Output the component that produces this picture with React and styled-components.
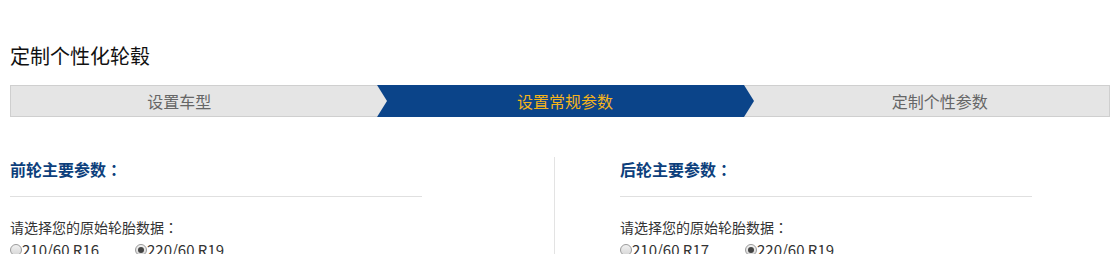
import React from 'react';
import styled, {createGlobalStyle, css} from 'styled-components';

const blue = '#0b4489';
const grey = '#e5e5e5';

const GlobalStyle = createGlobalStyle`
  body {
    margin: 0;
    background: #fff;
    font-family: "Noto Sans CJK SC", "Noto Sans", sans-serif;
    color: #333;
    overflow: hidden;
  }
`;

const Page = styled.div`
  padding: 0 10px;
`;

const Title = styled.h1`
  margin: 41px 0 14px;
  font-size: 20px;
  line-height: 30px;
  font-weight: normal;
  color: #111;
`;

const StepBar = styled.div`
  display: flex;
  height: 30px;
  border: 1px solid #cfcfcf;
  background: ${grey};
`;

const Step = styled.div`
  position: relative;
  box-sizing: border-box;
  width: ${props => props.width}px;
  padding-left: ${props => props.left || 0}px;
  padding-right: ${props => props.right || 0}px;
  text-align: center;
  font-size: 16px;
  line-height: 30px;
  color: #666;

  ${props => props.active && css`
    background: ${blue};
    color: #f5b31b;
    margin: -1px 0;
    line-height: 32px;

    &::before {
      content: '';
      position: absolute;
      left: 0;
      top: 0;
      border-left: 10px solid ${grey};
      border-top: 16px solid transparent;
      border-bottom: 16px solid transparent;
    }

    &::after {
      content: '';
      position: absolute;
      left: 100%;
      top: 0;
      z-index: 1;
      border-left: 10px solid ${blue};
      border-top: 16px solid transparent;
      border-bottom: 16px solid transparent;
    }
  `}
`;

const Columns = styled.div`
  display: grid;
  grid-template-columns: 545px 1fr;
  margin-top: 40px;
`;

const Column = styled.div`
  ${props => props.divider && css`
    border-right: 1px solid #e3e3e3;
  `}
  ${props => props.indent && css`
    padding-left: 65px;
  `}
`;

const Panel = styled.div`
  width: 412px;
`;

const Heading = styled.h2`
  margin: 0;
  padding-bottom: 15px;
  border-bottom: 1px solid #e0e0e0;
  font-size: 16px;
  line-height: 24px;
  font-weight: bold;
  color: #0d3f7c;
`;

// full-width colon centred in its cell, as in the reference
const Colon = styled.span`
  font-family: "Noto Sans CJK TC", sans-serif;
`;

const Prompt = styled.div`
  margin-top: 20px;
  font-size: 14px;
  line-height: 20px;
  color: #333;
`;

const Options = styled.div`
  display: flex;
  margin-top: 3px;
`;

const Option = styled.label`
  display: inline-flex;
  align-items: center;
  width: 125px;
  font-size: 15px;
  line-height: 20px;
  color: #333;
`;

const Radio = styled.span`
  box-sizing: border-box;
  flex: none;
  width: 12px;
  height: 12px;
  border-radius: 50%;
  border: 1px solid #9a9a9a;
  background: linear-gradient(#f2f2f2, #d6d6d6);
  display: inline-flex;
  align-items: center;
  justify-content: center;

  ${props => props.checked && css`
    &::after {
      content: '';
      width: 6px;
      height: 6px;
      border-radius: 50%;
      background: #444;
    }
  `}
`;

function Tire({title, sizes}) {
  return (
    <Panel>
      <Heading>{title}<Colon>：</Colon></Heading>
      <Prompt>请选择您的原始轮胎数据<Colon>：</Colon></Prompt>
      <Options>
        {sizes.map((s, i) =>
          <Option key={s}>
            <Radio checked={i === 1}/>
            {s}
          </Option>
        )}
      </Options>
    </Panel>
  );
}

export default function App() {
  return (
    <Page>
      <GlobalStyle/>
      <Title>定制个性化轮毂</Title>
      <StepBar>
        <Step width={367} right={30}>设置车型</Step>
        <Step active width={367} left={9}>设置常规参数</Step>
        <Step width={366} left={27}>定制个性参数</Step>
      </StepBar>
      <Columns>
        <Column divider>
          <Tire title="前轮主要参数" sizes={['210/60 R16', '220/60 R19']}/>
        </Column>
        <Column indent>
          <Tire title="后轮主要参数" sizes={['210/60 R17', '220/60 R19']}/>
        </Column>
      </Columns>
    </Page>
  );
}
